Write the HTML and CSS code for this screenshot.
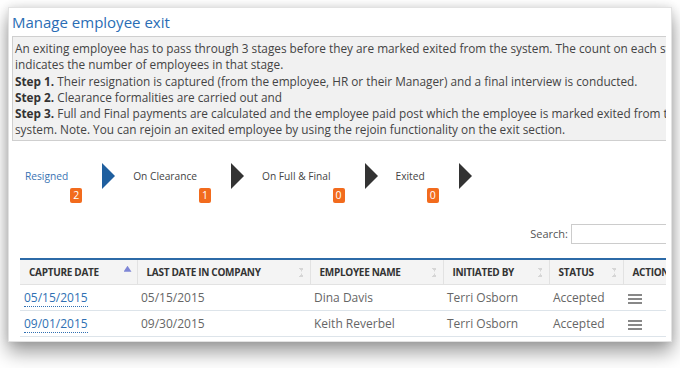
FILE: index.html
```html
<!DOCTYPE html>
<html lang="en">
<head>
    <meta charset="UTF-8">
    <title>Manage employee exit</title>
    <link rel="stylesheet" href="styles.css">
</head>
<body>
    <div class="card">
        <div class="card-inner">
            <h2 class="card-title">Manage employee exit</h2>
            <div class="info-box">
                An exiting employee has to pass through 3 stages before they are marked exited from the system. The count on each stage indicates the number of employees in that stage.<br>
                <b>Step 1.</b> Their resignation is captured (from the employee, HR or their Manager) and a final interview is conducted.<br>
                <b>Step 2.</b> Clearance formalities are carried out and<br>
                <b>Step 3.</b> Full and Final payments are calculated and the employee paid post which the employee is marked exited from the system. Note. You can rejoin an exited employee by using the rejoin functionality on the exit section.
            </div>

            <div class="stages">
                <div class="stage active">
                    <span class="stage-label">Resigned</span>
                    <span class="badge">2</span>
                    <svg class="stage-arrow" width="13" height="26" viewBox="0 0 13 26"><polygon points="0,0 13,13 0,26"/></svg>
                </div>
                <div class="stage">
                    <span class="stage-label">On Clearance</span>
                    <span class="badge">1</span>
                    <svg class="stage-arrow" width="13" height="26" viewBox="0 0 13 26"><polygon points="0,0 13,13 0,26"/></svg>
                </div>
                <div class="stage">
                    <span class="stage-label">On Full &amp; Final</span>
                    <span class="badge">0</span>
                    <svg class="stage-arrow" width="13" height="26" viewBox="0 0 13 26"><polygon points="0,0 13,13 0,26"/></svg>
                </div>
                <div class="stage">
                    <span class="stage-label">Exited</span>
                    <span class="badge">0</span>
                    <svg class="stage-arrow" width="13" height="26" viewBox="0 0 13 26"><polygon points="0,0 13,13 0,26"/></svg>
                </div>
            </div>

            <div class="table-wrap">
                <div class="search-row">
                    <label>Search:</label>
                    <input type="text" class="search-input">
                </div>
                <table class="grid">
                    <colgroup>
                        <col style="width: 117px">
                        <col style="width: 173px">
                        <col style="width: 133px">
                        <col style="width: 106px">
                        <col style="width: 74px">
                        <col style="width: 97px">
                    </colgroup>
                    <thead>
                        <tr>
                            <th class="sorted-asc">Capture Date</th>
                            <th>Last Date in Company</th>
                            <th>Employee Name</th>
                            <th>Initiated By</th>
                            <th>Status</th>
                            <th>Action</th>
                        </tr>
                    </thead>
                    <tbody>
                        <tr>
                            <td><a class="editable">05/15/2015</a></td>
                            <td>05/15/2015</td>
                            <td>Dina Davis</td>
                            <td>Terri Osborn</td>
                            <td>Accepted</td>
                            <td><span class="menu-icon"></span></td>
                        </tr>
                        <tr>
                            <td><a class="editable">09/01/2015</a></td>
                            <td>09/30/2015</td>
                            <td>Keith Reverbel</td>
                            <td>Terri Osborn</td>
                            <td>Accepted</td>
                            <td><span class="menu-icon"></span></td>
                        </tr>
                    </tbody>
                </table>
            </div>
        </div>
    </div>
</body>
</html>
```

FILE: styles.css
```css
html {
    background: #fff;
}

body {
    margin: 0;
    min-height: 368px;
    padding-top: 7px;
    box-sizing: border-box;
    font-family: 'Open Sans', 'Liberation Sans', sans-serif;
    font-size: 12px;
    color: #555;
}

.card {
    margin-left: 8px;
    width: 654px;
    height: 333px;
    background: #fff;
    border: 1px solid #e2e2e2;
    box-shadow: 0 10px 18px rgba(0, 0, 0, 0.4), 0 0 8px rgba(0, 0, 0, 0.1);
    padding: 0 5px 0 3px;
}

.card-inner {
    width: 654px;
    height: 333px;
    overflow: hidden;
}

.card-title {
    margin: 0;
    padding: 4px 0 0 0;
    height: 24px;
    font-size: 15px;
    font-weight: 400;
    color: #2a6db5;
}

.info-box {
    width: 695px;
    padding: 3px 2px 2px 2px;
    background: #f1f1f1;
    border: 1px solid #cfcfcf;
    font-size: 11.8px;
    line-height: 16.3px;
    color: #444;
}

.info-box b {
    color: #333;
}

.stages {
    display: flex;
    padding: 22px 0 0 13px;
    height: 50px;
}

.stage {
    display: flex;
    align-items: flex-start;
    color: #444;
}

.stage-label {
    line-height: 26px;
    font-size: 10.2px;
}

.stage.active .stage-label {
    color: #3a73b3;
}

.badge {
    margin: 25px 0 0 2px;
    min-width: 12px;
    height: 15px;
    line-height: 15px;
    text-align: center;
    background: #f26b1d;
    color: #fff;
    border-radius: 2px;
    font-size: 10.5px;
}

.stage-arrow {
    margin: 0 18px 0 20px;
    fill: #333;
}

.stage.active .stage-arrow {
    fill: #1f5f9f;
}

.table-wrap {
    width: 700px;
    margin-left: 8px;
}

.search-row {
    display: flex;
    justify-content: flex-end;
    align-items: center;
    gap: 3px;
    height: 20px;
    margin-top: 11px;
    margin-bottom: 14px;
    color: #555;
    font-size: 11px;
}

.search-input {
    width: 149px;
    height: 20px;
    box-sizing: border-box;
    border: 1px solid #ccc;
    margin: 0;
}

.grid {
    width: 700px;
    border-collapse: collapse;
    table-layout: fixed;
    border-top: 2px solid #2c6aa7;
}

.grid th {
    position: relative;
    height: 24px;
    padding: 0 0 0 9px;
    text-align: left;
    background: #f4f4f4;
    font-size: 10px;
    font-weight: 700;
    letter-spacing: -0.3px;
    text-transform: uppercase;
    color: #333;
    border-left: 1px solid #e2e2e2;
    border-bottom: 1px solid #e2e2e2;
    white-space: nowrap;
    overflow: hidden;
}

.grid th:first-child {
    border-left: none;
}

.grid th::after {
    content: '';
    position: absolute;
    right: 6px;
    top: 8px;
    width: 5px;
    height: 9px;
    background:
        linear-gradient(to top right, transparent 50%, #d6d6d6 50%) left 0 / 50% 4px no-repeat,
        linear-gradient(to top left, transparent 50%, #d6d6d6 50%) right 0 / 50% 4px no-repeat,
        linear-gradient(to bottom right, transparent 50%, #d6d6d6 50%) left 5px / 50% 4px no-repeat,
        linear-gradient(to bottom left, transparent 50%, #d6d6d6 50%) right 5px / 50% 4px no-repeat;
}

.grid th.sorted-asc::after {
    top: 6px;
    width: 8px;
    height: 6px;
    right: 5px;
    background: #7e86d6;
    clip-path: polygon(50% 0, 100% 100%, 0 100%);
}

.grid td {
    height: 25px;
    padding: 0 0 0 4px;
    border-bottom: 1px solid #dde4ea;
    color: #666;
    white-space: nowrap;
}

.editable {
    color: #3070b3;
    border-bottom: 1px dotted #3070b3;
}

.menu-icon {
    display: inline-block;
    vertical-align: middle;
    width: 14px;
    height: 2px;
    background: #888;
    box-shadow: 0 4px 0 #888, 0 8px 0 #888;
    margin: 0 0 8px 1px;
}
```
